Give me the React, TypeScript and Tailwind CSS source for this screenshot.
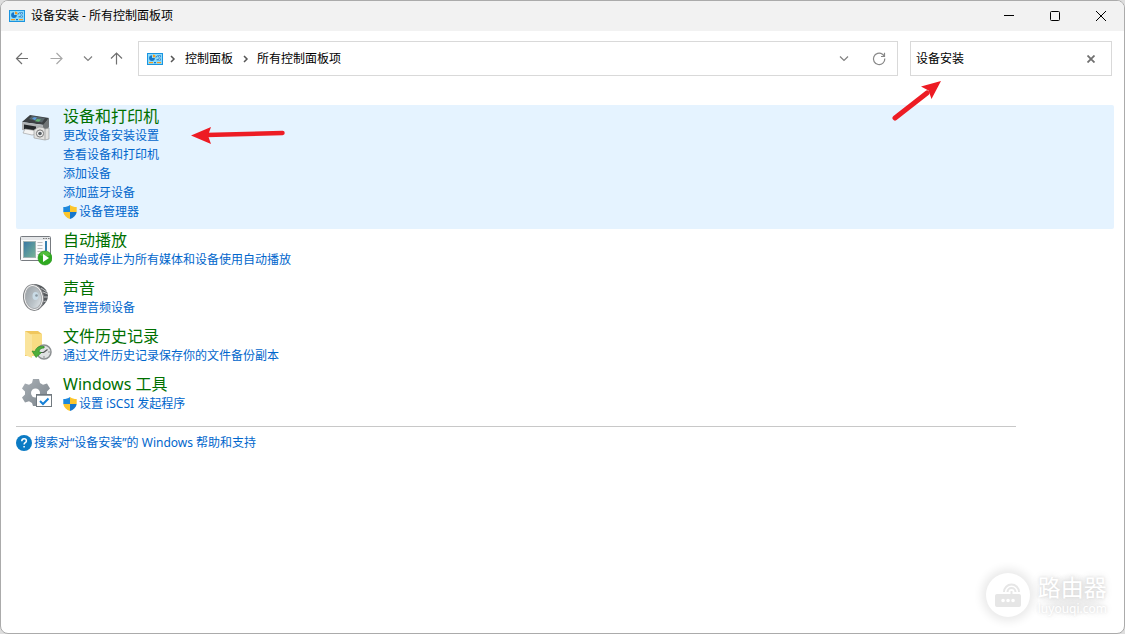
import React from 'react'

type Task = { label: string; shield?: boolean }
type Item = { title: string; icon: React.ReactNode; tasks: Task[]; active?: boolean }

function PanelIcon() {
  return (
    <svg width="16" height="12" viewBox="0 0 16 12" className="shrink-0">
      <rect width="16" height="12" fill="#1a94e0" />
      <rect x="1" y="1" width="14" height="10" fill="#8edcfa" />
      <path d="M5 2.200a2.900 2.900 0 1 0 2.900 2.900H5z" fill="#1676c8" />
      <path d="M6 1.600v2.600h2.600A2.600 2.600 0 0 0 6 1.600z" fill="#f59a23" />
      <path d="M9 4.500l1.500-2M9.500 6.800h1.500" stroke="#1676c8" />
      <path d="M11.500 2.500h2v1.500h-2zM11.500 5.800h2v1.400h-2z" stroke="#1676c8" fill="#fff" strokeWidth=".7" />
      <rect x="2" y="9" width="4" height="1.200" fill="#f59a23" />
      <rect x="7" y="9" width="2" height="1.200" fill="#1676c8" />
      <rect x="10" y="9" width="4" height="1.200" fill="#f59a23" />
    </svg>
  )
}

function Shield() {
  return (
    <svg width="14" height="14" viewBox="0 0 14 14" className="shrink-0">
      <path d="M7 0C5 1.400 3 2 .3 2v5H7z" fill="#1e88dc" />
      <path d="M7 0c2 1.400 4 2 6.700 2v5H7z" fill="#fcc52c" />
      <path d="M.3 7C.7 10.400 3.500 12.800 7 14V7z" fill="#fcc52c" />
      <path d="M13.700 7c-.4 3.400-3.200 5.800-6.700 7V7z" fill="#1576cc" />
    </svg>
  )
}

function PrinterIcon() {
  return (
    <svg width="32" height="32" viewBox="0 0 32 32">
      <path d="M2 12 10 5l19 3-5 7z" fill="#3c4043" />
      <path d="M9 9l3-3 13 2-3 4.500z" fill="#59656b" />
      <path d="M12 8.500l2-1.300 3 .4-2 2.600z" fill="#5c9de0" />
      <path d="M17 9l4 .4-2 2.400-4-.5z" fill="#63b475" />
      <path d="M2 12l21 3v8L2 20z" fill="#b0b3b5" />
      <path d="M23 15l6-7v9l-4 6h-2z" fill="#707476" />
      <path d="M4 14.500l12 2v4.500L4 19z" fill="#24282a" />
      <path d="M5 19l10 1.500v4l-3 .5-9-2z" fill="#f4f4f4" stroke="#999" strokeWidth=".6" />
      <path d="M14 20l3-2 2-1 4 .5 2 1.500 4-1v11l-4 1-11-2z" fill="#e2e2e0" stroke="#929494" strokeWidth=".6" />
      <circle cx="20" cy="23.500" r="3.600" fill="#eee" stroke="#777" strokeWidth="1" />
      <circle cx="20" cy="23.500" r="1.800" fill="#596065" />
      <path d="M25 19v11" stroke="#aaa" />
    </svg>
  )
}

function AutoPlayIcon() {
  return (
    <svg width="32" height="32" viewBox="0 0 32 32">
      <defs>
        <linearGradient id="screen" x1="0" y1="0" x2="1" y2="1">
          <stop offset="0" stopColor="#3876a4" />
          <stop offset="1" stopColor="#79b695" />
        </linearGradient>
      </defs>
      <rect x=".5" y="2.500" width="30" height="24" rx="1" fill="#fafafa" stroke="#777b80" />
      <path d="M1 3h29v3H1z" fill="#e4e6e8" />
      <path d="M23 4.500h1.500M25.500 4.500H27M28 4.500h1.500" stroke="#777" />
      <rect x="3.500" y="7.500" width="12" height="16" fill="url(#screen)" stroke="#a2b4b3" />
      <path d="M17.500 8.500h5M17.500 11.500h5M17.500 14.500h5M17.500 17.500h5M17.500 20.500h3" stroke="#bbb" />
      <rect x="25" y="7" width="2" height="10" fill="#337eae" />
      <circle cx="25" cy="24" r="7" fill="#2faa20" stroke="#219018" strokeWidth=".6" />
      <path d="M19.500 21a6 6 0 0 1 11 0q-5 3-11 0z" fill="#69ca4f" opacity=".6" />
      <path d="M23 20v8l6-4z" fill="#fff" />
    </svg>
  )
}

function SoundIcon() {
  return (
    <svg width="32" height="32" viewBox="0 0 32 32">
      <defs>
        <linearGradient id="cone" x1="0" y1="0" x2="1" y2="1">
          <stop offset="0" stopColor="#969ca1" />
          <stop offset=".6" stopColor="#bcc4c9" />
          <stop offset="1" stopColor="#e8ecee" />
        </linearGradient>
      </defs>
      <path d="M14 2c7 0 14 5 14 12 0 5-4 9-10 14z" fill="#55595c" />
      <path d="M21 6l6 4M23 10l5 2M23 15h5M22 20l4-1" stroke="#c4c6c8" />
      <ellipse cx="13.500" cy="15.500" rx="10" ry="13" transform="rotate(-8 13.500 15.500)" fill="#f2f2f2" stroke="#85878a" />
      <ellipse cx="13.500" cy="15.500" rx="8" ry="11" transform="rotate(-8 13.500 15.500)" fill="url(#cone)" stroke="#a8acaf" />
      <ellipse cx="15.500" cy="14" rx="3" ry="4" fill="#c9dbe6" />
      <circle cx="16.500" cy="13.500" r="1.300" fill="#8a979f" />
    </svg>
  )
}

function HistoryIcon() {
  return (
    <svg width="32" height="32" viewBox="0 0 32 32">
      <path d="M5 1h13l4 3v22H5z" fill="#f0c75e" />
      <path d="M11 4h11v22H11z" fill="#f9dc83" />
      <path d="M5 1l7 4v23l-7-3z" fill="#fae49c" />
      <circle cx="24" cy="22" r="7" fill="#dfe1e1" stroke="#8b8f91" strokeWidth="1.500" />
      <path d="M24 16.500v1M24 26.500v1M28.500 22h1M23.500 22.500l4-3M20.500 22.500h4" stroke="#555" strokeWidth="1.200" />
      <path d="M24 16.500c-5-1-8 1-9 5l-3-.5 4 6.500 5.500-5-2.500-.5c.5-3 2-4 5-4z" fill="#4dae3a" stroke="#258520" strokeWidth=".6" />
    </svg>
  )
}

function ToolsIcon() {
  return (
    <svg width="32" height="32" viewBox="0 0 32 32">
      <defs>
        <linearGradient id="gear" x1="0" y1="0" x2="1" y2="1">
          <stop offset="0" stopColor="#a9b0b6" />
          <stop offset="1" stopColor="#7c848b" />
        </linearGradient>
      </defs>
      <path
        d="M13 1h6l1 4 3 1.700 4-1.200 3 5-3 3v3l3 3-3 5-4-1.200-3 1.700-1 3h-6l-1-3-3-1.700-4 1.200-3-5 3-3v-3l-3-3 3-5 4 1.200 3-1.700z"
        fill="url(#gear)"
      />
      <circle cx="15.500" cy="15" r="4.500" fill="#fff" />
      <rect x="16.500" y="16.500" width="15" height="12" fill="#fff" stroke="#727a80" />
      <path d="M17 17.500h14" stroke="#9aa1a6" />
      <path d="m20 23 3 3 5.500-5.500" fill="none" stroke="#1680d7" strokeWidth="2" />
    </svg>
  )
}

function Chevron({ down = false }: { down?: boolean }) {
  return (
    <svg width="10" height="10" viewBox="0 0 10 10" fill="none" stroke={down ? '#808080' : '#555'} strokeWidth={down ? 1.2 : 1.5}>
      <path d={down ? 'm1 2.500 4 4 4-4' : 'm4 2 3 3-3 3'} />
    </svg>
  )
}

const items: Item[] = [
  {
    title: '设备和打印机',
    icon: <PrinterIcon />,
    active: true,
    tasks: [
      { label: '更改设备安装设置' },
      { label: '查看设备和打印机' },
      { label: '添加设备' },
      { label: '添加蓝牙设备' },
      { label: '设备管理器', shield: true },
    ],
  },
  { title: '自动播放', icon: <AutoPlayIcon />, tasks: [{ label: '开始或停止为所有媒体和设备使用自动播放' }] },
  { title: '声音', icon: <SoundIcon />, tasks: [{ label: '管理音频设备' }] },
  { title: '文件历史记录', icon: <HistoryIcon />, tasks: [{ label: '通过文件历史记录保存你的文件备份副本' }] },
  { title: 'Windows 工具', icon: <ToolsIcon />, tasks: [{ label: '设置 iSCSI 发起程序', shield: true }] },
]

function TitleBar() {
  return (
    <header className="flex h-[30px] items-center bg-[#f2f2f2] pl-2">
      <PanelIcon />
      <h1 className="ml-1.5 flex-1">设备安装 - 所有控制面板项</h1>
      <button aria-label="最小化" className="flex h-full w-[46px] items-center justify-center">
        <svg width="10" height="10" stroke="#000"><path d="M0 4.500h10" /></svg>
      </button>
      <button aria-label="最大化" className="flex h-full w-[46px] items-center justify-center">
        <svg width="10" height="10" fill="none" stroke="#000"><rect x=".5" y=".5" width="9" height="9" rx="1" /></svg>
      </button>
      <button aria-label="关闭" className="flex h-full w-[46px] items-center justify-center">
        <svg width="10" height="10" stroke="#000"><path d="m0 0 10 10M10 0 0 10" /></svg>
      </button>
    </header>
  )
}

function Toolbar() {
  return (
    <div className="flex items-center pt-2.5 pr-3 pl-3.5">
      <nav className="flex w-[123px] shrink-0 items-center">
        <button aria-label="后退">
          <svg width="14" height="14" fill="none" stroke="#707070" strokeWidth="1.200"><path d="M13 6.500H1.500M7 1 1.500 6.500 7 12" /></svg>
        </button>
        <button aria-label="前进" className="ml-5">
          <svg width="14" height="14" fill="none" stroke="#a8a8a8" strokeWidth="1.200"><path d="M1.500 6.500H13M7.500 1 13 6.500 7.500 12" /></svg>
        </button>
        <button aria-label="最近位置" className="ml-5"><Chevron down /></button>
        <button aria-label="上移" className="ml-4">
          <svg width="14" height="14" fill="none" stroke="#707070" strokeWidth="1.200"><path d="M7.500 12.500V1M2 6.500 7.500 1 13 6.500" /></svg>
        </button>
      </nav>
      <div className="flex h-[35px] flex-1 items-center border border-[#d9d9d9] px-2">
        <PanelIcon />
        <span className="ml-1"><Chevron /></span>
        <a href="#panel" className="ml-2">控制面板</a>
        <span className="mx-[7px]"><Chevron /></span>
        <a href="#all">所有控制面板项</a>
        <button aria-label="历史记录" className="ml-auto"><Chevron down /></button>
        <button aria-label="刷新" className="mr-[3px] ml-[23px]">
          <svg width="14" height="14" viewBox="0 0 14 14" fill="none" stroke="#888" strokeWidth="1.200">
            <path d="M12.800 6.500a5.700 5.700 0 1 1-2.300-4.200L12.500 4.200M12.500.8v3.700H9" />
          </svg>
        </button>
      </div>
      <div className="ml-3 flex h-[35px] w-[202px] items-center border border-[#d9d9d9] pr-4 pl-[5px]">
        <input aria-label="搜索" defaultValue="设备安装" className="min-w-0 flex-1 bg-transparent outline-none" />
        <button aria-label="清除">
          <svg width="8" height="8" stroke="#707070" strokeWidth="1.800"><path d="m.5.5 7 7M7.500.5l-7 7" /></svg>
        </button>
      </div>
    </div>
  )
}

function PanelItem({ item }: { item: Item }) {
  return (
    <section className={`flex rounded-xs pt-px pb-2 pl-1 ${item.active ? 'bg-[#e5f3ff]' : ''}`}>
      <div className="mt-1 h-8 w-8 shrink-0">{item.icon}</div>
      <div className="ml-[11px]">
        <h2 className="text-[16px] leading-5 text-[#007000]">
          <a href="#item">{item.title}</a>
        </h2>
        <ul>
          {item.tasks.map((task) => (
            <li key={task.label} className="leading-[19px]">
              <a href="#task" className="flex items-center gap-0.5 text-[#0066cc]">
                {task.shield && <Shield />}
                {task.label}
              </a>
            </li>
          ))}
        </ul>
      </div>
    </section>
  )
}

export default function App() {
  return (
    <div className="min-h-screen bg-[#dedede]">
      <div className="relative flex min-h-screen flex-col overflow-hidden rounded-lg border border-[#ababab] bg-white font-['Noto_Sans','Noto_Sans_CJK_SC',sans-serif] text-[12px] leading-4 text-black">
        <TitleBar />
        <Toolbar />
        <main className="pt-[29px] pr-2.5 pb-8 pl-[15px]">
          {items.map((item) => (
            <PanelItem key={item.title} item={item} />
          ))}
          <hr className="mt-[5px] max-w-[1000px] border-[#c8c8c8]" />
          <a href="#help" className="mt-2 inline-flex items-center gap-0.5 text-[#0066cc]">
            <svg width="16" height="16" viewBox="0 0 16 16">
              <circle cx="8" cy="8" r="8" fill="#0b7bc4" />
              <path d="M5.800 6.200c0-3.200 4.600-3 4.600-.2 0 1.700-2.300 1.700-2.300 3.400M8.100 11v1.600" fill="none" stroke="#fff" strokeWidth="1.500" />
            </svg>
            搜索对“设备安装”的 Windows 帮助和支持
          </a>
        </main>

        {/* Red pointers */}
        <svg className="absolute top-[119px] left-[189px]" width="98" height="28" viewBox="0 0 98 28">
          <path d="M16 15 92.500 13" stroke="#ed1c24" strokeWidth="4.500" strokeLinecap="round" />
          <path d="m1 15.500 20-8.500-3 8.500 3 8.500z" fill="#ed1c24" />
        </svg>
        <svg className="absolute top-[78px] right-[180px]" width="52" height="44" viewBox="0 0 52 44">
          <path d="m3 39 32-25" stroke="#ed1c24" strokeWidth="5" strokeLinecap="round" />
          <path d="m49 2-20 5.500 7.500 4 3 8.500z" fill="#ed1c24" />
        </svg>

        {/* Site watermark */}
        <div className="absolute right-[17px] bottom-4 flex items-center gap-2 text-white">
          <div className="flex h-11 w-11 items-center justify-center rounded-full bg-white shadow-[0_0_10px_4px_#e9e9e9]">
            <svg width="28" height="26" viewBox="0 0 28 26" fill="none">
              <path d="M10 10a7.500 7.500 0 0 1 15 0M13.500 10a4 4 0 0 1 8 0" stroke="#e6e6e6" strokeWidth="2" />
              <path d="M17.500 9v4" stroke="#e6e6e6" strokeWidth="2" />
              <rect x="1" y="12" width="26" height="13" rx="2" fill="#e6e6e6" />
              <path d="M9 18.500h.1M14 18.500h.1M19 18.500h.1" stroke="#fff" strokeWidth="3.500" strokeLinecap="round" />
            </svg>
          </div>
          <div className="bg-[radial-gradient(closest-side,#e9e9e9,#f0f0f0_60%,#ffffff)] [text-shadow:0_0_3px_#d8d8d8,0_0_8px_#dcdcdc]">
            <div className="text-[23px] leading-7">路由器</div>
            <div className="text-[12px] leading-4">luyouqi.com</div>
          </div>
        </div>
      </div>
    </div>
  )
}
